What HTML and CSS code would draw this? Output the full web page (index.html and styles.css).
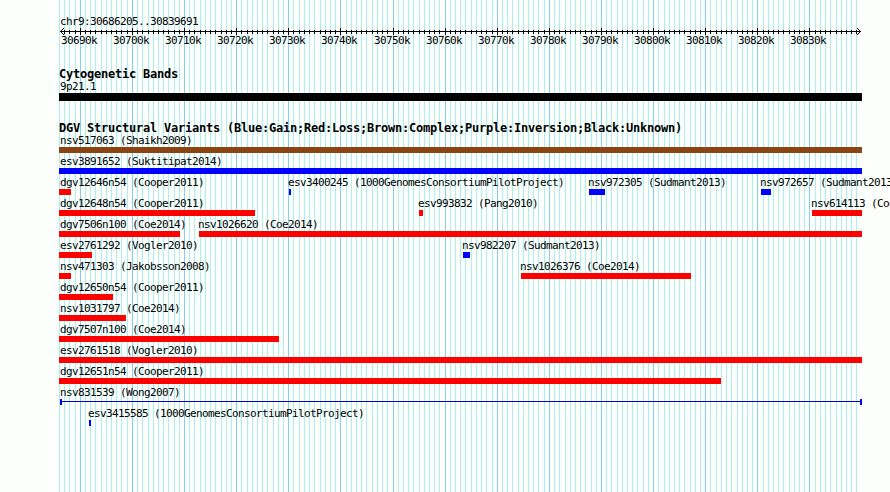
FILE: index.html
```
<!DOCTYPE html>
<html lang="en">
<head>
  <meta charset="UTF-8" />
  <title>chr9:30686205..30839691</title>
  <link rel="stylesheet" href="styles.css">
</head>
<body>

  <div class="browser">
    <svg class="grid" id="grid" width="890" height="492"></svg>

    <div class="ruler">
      <div class="label">chr9:30686205..30839691</div>
      <svg class="axis" id="axis" width="890" height="20"></svg>
    </div>

    <div class="track bands">
      <h2>Cytogenetic Bands</h2>
      <div class="label">9p21.1</div>
      <div class="band"></div>
    </div>

    <div class="track variants">
      <h2>DGV Structural Variants (Blue:Gain;Red:Loss;Brown:Complex;Purple:Inversion;Black:Unknown)</h2>
      <div id="rows"></div>
    </div>
  </div>

  <script src="script.js"></script>
</body>
</html>
```
FILE: styles.css
```
body {
  margin: 0;
  background: #fdfffc;
  color: #000;
  font-family: "DejaVu Sans Mono", monospace;
}
.browser {
  position: relative;
  width: 890px;
  height: 492px;
  overflow: hidden;
}
/* grid lines lie behind all tracks */
.grid {
  position: absolute;
  top: 0;
  left: 0;
  z-index: -1;
}
.minor {
  fill: #afeeee;
}
.major {
  fill: #87ceeb;
}
.label {
  font-size: 11px;
  line-height: 13px;
  height: 13px;
  letter-spacing: -0.622px;
  white-space: pre;
}
.ruler {
  padding-top: 15px;
}
.ruler .label,
.bands .label {
  padding-left: 60px;
}
.axis {
  display: block;
}
.axis text {
  font-size: 11px;
  letter-spacing: -0.622px;
}
.axis path {
  fill: none;
  stroke: #000;
}
h2 {
  margin: 0;
  padding-left: 59px;
  font-size: 12px;
  line-height: 13px;
  height: 12px;
  letter-spacing: -0.224px;
  white-space: pre;
}
.bands {
  padding-top: 20px;
}
.band {
  width: 803px;
  height: 8px;
  margin-left: 59px;
  background: #000;
}
.variants {
  padding-top: 21px;
}
.row {
  display: grid;
  height: 21px;
}
.feature {
  grid-area: 1 / 1;
}
.feature .label {
  width: 0;
  text-indent: -1px;
}
.edge .label {
  padding-left: 2px;
}
.bar {
  height: 6px;
}
.gain {
  background: #00f;
}
.loss {
  background: #f00;
}
.complex {
  background: #8b4513;
}
.span {
  box-sizing: border-box;
  margin-left: 1px;
  padding-top: 2px;
  border: solid #00f;
  border-width: 0 2px;
}
.span::before {
  content: "";
  display: block;
  height: 1px;
  background: #0000cd;
}
```
FILE: script.js
```
const start = 30686205;
const end = 30839691;
const scale = 800 / (end - start);

function toX(pos) {
  return Math.round(60 + (pos - start) * scale);
}

// Grid lines and ruler ticks, one per kilobase
let lines = "";
let ticks = '<path d="M60 3.5H861M64 0L60.5 3.5L64 7M857 0L860.5 3.5L857 7"/>';
for (let kb = 30686; kb <= 30839; kb++) {
  const x = toX(kb * 1000);
  const major = kb % 10 === 0;
  lines += `<rect class="${major ? "major" : "minor"}" x="${x}" y="0" width="1" height="492"/>`;
  if (x > 60) {
    ticks += major
      ? `<rect x="${x}" y="0" width="1" height="7"/><text x="${x - 19}" y="16">${kb}k</text>`
      : `<rect x="${x}" y="2" width="1" height="4"/>`;
  }
}
document.getElementById("grid").innerHTML = lines;
document.getElementById("axis").innerHTML = ticks;

// [name, type, left, right]
const rows = [
  [["nsv517063 (Shaikh2009)", "complex", 59, 862]],
  [["esv3891652 (Suktitipat2014)", "gain", 59, 862]],
  [["dgv12646n54 (Cooper2011)", "loss", 59, 71],
   ["esv3400245 (1000GenomesConsortiumPilotProject)", "gain", 289, 291],
   ["nsv972305 (Sudmant2013)", "gain", 589, 605],
   ["nsv972657 (Sudmant2013)", "gain", 761, 771]],
  [["dgv12648n54 (Cooper2011)", "loss", 59, 255],
   ["esv993832 (Pang2010)", "loss", 419, 423],
   ["nsv614113 (Cooper2011)", "loss", 812, 862]],
  [["dgv7506n100 (Coe2014)", "loss", 59, 180],
   ["nsv1026620 (Coe2014)", "loss", 199, 862]],
  [["esv2761292 (Vogler2010)", "loss", 59, 92],
   ["nsv982207 (Sudmant2013)", "gain", 463, 470]],
  [["nsv471303 (Jakobsson2008)", "loss", 59, 71],
   ["nsv1026376 (Coe2014)", "loss", 521, 691]],
  [["dgv12650n54 (Cooper2011)", "loss", 59, 113]],
  [["nsv1031797 (Coe2014)", "loss", 59, 126]],
  [["dgv7507n100 (Coe2014)", "loss", 59, 279]],
  [["esv2761518 (Vogler2010)", "loss", 59, 862]],
  [["dgv12651n54 (Cooper2011)", "loss", 59, 721]],
  [["nsv831539 (Wong2007)", "span", 59, 862]],
  [["esv3415585 (1000GenomesConsortiumPilotProject)", "gain", 89, 91]]
];

document.getElementById("rows").innerHTML = rows.map(row =>
  '<div class="row">' + row.map(([name, type, left, right]) => `
    <div class="feature${left === 59 ? " edge" : ""}" style="margin-left: ${left}px; width: ${right - left}px">
      <div class="label">${name}</div>
      <div class="bar ${type}"></div>
    </div>`).join("") + "</div>"
).join("");
```
